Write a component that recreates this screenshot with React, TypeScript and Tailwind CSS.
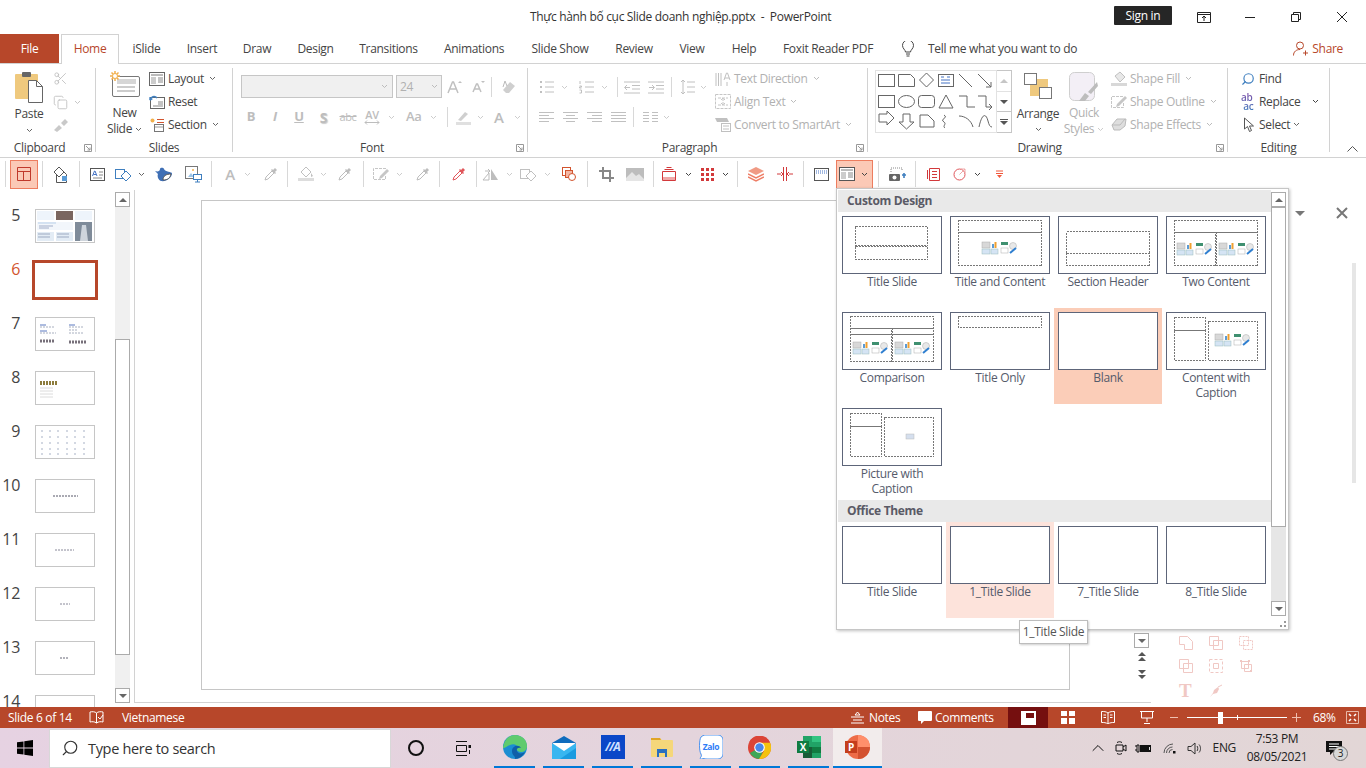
import type { ReactNode } from "react"
import { Scissors, Copy, Search, ChevronUp } from "lucide-react"

const RED = "#B7472A"

function Chev({ className = "text-[#666]" }: { className?: string }) {
  return (
    <svg width="7" height="5" viewBox="0 0 7 5" className={`shrink-0 ${className}`}>
      <path d="M1 1l2.5 2.5L6 1" fill="none" stroke="currentColor" strokeWidth="1" />
    </svg>
  )
}

function I({ w = 16, h = 16, children, className = "" }: { w?: number; h?: number; children: ReactNode; className?: string }) {
  return (
    <svg width={w} height={h} viewBox={`0 0 ${w} ${h}`} fill="none" className={`shrink-0 ${className}`}>
      {children}
    </svg>
  )
}

function Launcher() {
  return (
    <I w={8} h={8} className="text-[#999]">
      <path d="M.5.5h7v7h-7zM2 2l4 4M6 3.5V6H3.5" stroke="currentColor" />
    </I>
  )
}

function Group({ w, label, launcher, className = "", children }: { w: string; label: string; launcher?: boolean; className?: string; children: ReactNode }) {
  return (
    <div className={`flex h-[84px] shrink-0 flex-col border-r border-[#d2d2d2] ${w}`}>
      <div className={`min-h-0 flex-1 ${className}`}>{children}</div>
      <div className={`relative -mb-[4px] h-[16px] shrink-0 text-center text-[12px] leading-[16px] text-[#444] ${launcher ? "pr-[16px]" : ""}`}>
        {label}
        {launcher && (
          <span className="absolute right-[3px] top-[4px] flex">
            <Launcher />
          </span>
        )}
      </div>
    </div>
  )
}

function CmdRow({ icon, label, chev, off, className = "" }: { icon: ReactNode; label: string; chev?: boolean; off?: boolean; className?: string }) {
  return (
    <div className={`flex h-[23px] items-center gap-[3px] text-[12px] ${off ? "text-[#b1b1b1]" : "text-[#444]"} ${className}`}>
      <span className="flex w-[16px] justify-center">{icon}</span>
      <span className="whitespace-nowrap">{label}</span>
      {chev && <Chev className={off ? "ml-[2px] text-[#bbb]" : "ml-[2px] text-[#666]"} />}
    </div>
  )
}

function ClipboardGroup() {
  return (
    <Group w="w-[96px]" label="Clipboard" launcher className="flex">
      <div className="flex w-[58px] flex-col items-center pt-[3px]">
        <I w={30} h={32}>
          <rect x="1" y="3" width="23" height="25" rx="1" fill="#EFC97E" />
          <rect x="8" y="1" width="9" height="5" rx="1" fill="#666" />
          <path d="M14.5 9.5h8l6 6v16h-14z" fill="#fff" stroke="#666" />
          <path d="M22.5 9.5v6h6" stroke="#666" />
        </I>
        <span className="mt-[3px] text-[12px] leading-[15px] text-[#444]">Paste</span>
        <span className="mt-[7px] flex"><Chev /></span>
      </div>
      <div className="-ml-[5px] flex flex-col text-[#bbb]">
        <div className="flex h-[21px] items-center"><Scissors size={15} strokeWidth={1.3} /></div>
        <div className="flex h-[24px] items-center gap-[6px] pt-[3px]">
          <Copy size={15} strokeWidth={1.3} />
          <Chev className="text-[#c6c6c6]" />
        </div>
        <div className="flex h-[22px] items-center">
          <I w={16} h={15}>
            <path d="M1 13l5-5 3 3-5 4zM8 6l4-4 3 3-4 4z" fill="#c9c9c9" />
          </I>
        </div>
      </div>
    </Group>
  )
}

function SlidesGroup() {
  return (
    <Group w="w-[137px]" label="Slides" className="flex">
      <div className="flex w-[53px] flex-col items-center pl-[4px] text-[12px] leading-[16px] text-[#444]">
        <I w={32} h={29} className="mt-[2px]">
          <rect x="3.5" y="6.5" width="27" height="20" rx="1.5" fill="#fff" stroke="#777" />
          <rect x="8" y="9" width="19" height="5" fill="#d6d6d6" />
          <path d="M8 17h18M8 21h18" stroke="#999" />
          <path d="M6 1v10M1 6h10M2.5 2.5l7 7M9.5 2.5l-7 7" stroke="#F2B04C" strokeWidth="1.5" />
          <circle cx="6" cy="6" r="2.5" fill="#fff" stroke="#F2B04C" />
        </I>
        <span className="mt-[6px]">New</span>
        <span className="flex items-center gap-[3px]">Slide <Chev /></span>
      </div>
      <div className="-mt-[1px] flex flex-col">
        <CmdRow
          chev
          label="Layout"
          icon={<I w={16} h={14}><rect x=".5" y=".5" width="15" height="13" stroke="#666" /><rect x="2" y="2" width="12" height="2" fill="#bbb" /><rect x="2" y="5" width="5" height="7" fill="#ccc" /><path d="M9 6h5M9 8h5M9 10h5" stroke="#888" /></I>}
        />
        <CmdRow
          label="Reset"
          icon={<I w={16} h={14}><rect x="1.5" y="2.5" width="14" height="11" stroke="#666" /><path d="M1 5a4 4 0 017-2" stroke="#3F7FBF" strokeWidth="1.6" /><path d="M0 2l1 4 3-2z" fill="#3F7FBF" /><path d="M9 7h5M9 9h5M4 11h10" stroke="#888" /></I>}
        />
        <CmdRow
          chev
          label="Section"
          icon={<I w={16} h={15}><circle cx="3.5" cy="3.5" r="2" fill="#F2B04C" /><path d="M8 2.5h7M8 5.5h7" stroke="#D2542E" /><rect x="5.5" y="7.5" width="9" height="7" stroke="#777" /><path d="M6 10h8" stroke="#999" /></I>}
        />
      </div>
    </Group>
  )
}

const fontToggles = ["B", "I", "U"]

function FontGroup() {
  return (
    <Group w="w-[295px]" label="Font" launcher className="flex flex-col pl-[8px] pt-[7px]">
      <div className="flex h-[23px] items-center">
        <div className="flex h-[23px] w-[152px] items-center justify-end border border-[#c6c6c6] bg-[#f0f0f0] pr-[4px]"><Chev className="text-[#bbb]" /></div>
        <div className="ml-[3px] flex h-[23px] w-[46px] items-center justify-between border border-[#c6c6c6] bg-[#f0f0f0] px-[3px] text-[12px] text-[#b1b1b1]">24<Chev className="text-[#bbb]" /></div>
        <I w={15} h={14} className="ml-[5px]"><path d="M1 13L5.5 2h1L11 13M3 9h6" stroke="#c0c0c0" strokeWidth="1.5" /><path d="M11 3l2-2 2 2z" fill="#c0c0c0" /></I>
        <I w={13} h={13} className="ml-[10px]"><path d="M1 12L4.5 4h1L9 12M2.5 9h5" stroke="#c0c0c0" strokeWidth="1.5" /><path d="M9 1l2 2 2-2z" fill="#c0c0c0" /></I>
        <div className="ml-[6px] h-[20px] w-px bg-[#d8d8d8]" />
        <I w={16} h={16} className="ml-[8px]"><path d="M6 14l-3-3 7-8 5 4-6 7z" fill="#cfcfcf" /><path d="M3 8l2-6 2 5" stroke="#bbb" /></I>
      </div>
      <div className="-ml-[2px] mt-[8px] flex h-[22px] items-center text-[#bdbdbd]">
        {fontToggles.map((t) => (
          <span key={t} className={`w-[24px] text-center text-[13px] font-bold ${t === "I" ? "italic" : ""} ${t === "U" ? "underline" : ""}`}>{t}</span>
        ))}
        <span className="w-[25px] text-center text-[14px] font-bold [text-shadow:1px_1px_1px_#ccc]">S</span>
        <span className="w-[24px] text-center text-[11px] line-through">abc</span>
        <span className="flex w-[24px] flex-col items-center text-[11px] font-semibold leading-[10px]">
          AV
          <I w={16} h={5}><path d="M1 2.5h14M3 .5l-2 2 2 2M13 .5l2 2-2 2" stroke="#bdbdbd" /></I>
        </span>
        <Chev className="ml-[4px] text-[#ccc]" />
        <span className="ml-[11px] w-[16px] text-[13px] font-semibold">Aa</span>
        <Chev className="ml-[8px] text-[#ccc]" />
        <div className="ml-[10px] h-[20px] w-px bg-[#d8d8d8]" />
        <I w={16} h={16} className="ml-[8px]"><path d="M2 11l7-8 3 2-7 7z" fill="#cfcfcf" /><rect y="13" width="15" height="3" fill="#e0e0e0" /></I>
        <Chev className="ml-[5px] text-[#ccc]" />
        <span className="ml-[10px] w-[12px] text-[15px] font-semibold">A</span>
        <Chev className="ml-[8px] text-[#ccc]" />
      </div>
    </Group>
  )
}

function ListIcon({ numbered }: { numbered?: boolean }) {
  return (
    <I w={15} h={14}>
      {numbered ? (
        <path d="M1 1v3M.5 6h2v1h-2v1h2M.5 10h2v3h-2" stroke="#c0c0c0" />
      ) : (
        <path d="M1 1h2v2H1zM1 6h2v2H1zM1 11h2v2H1z" fill="#c0c0c0" />
      )}
      <path d="M6 2h9M6 7h9M6 12h9" stroke="#c0c0c0" />
    </I>
  )
}

function AlignIcon({ d }: { d: string }) {
  return <I w={15} h={11}><path d={d} stroke="#c0c0c0" /></I>
}

function ParagraphGroup() {
  return (
    <Group w="w-[340px]" label="Paragraph" launcher className="flex pl-[11px]">
      <div className="flex w-[176px] flex-col pt-[9px]">
        <div className="flex h-[20px] items-center">
          <ListIcon />
          <Chev className="ml-[7px] text-[#ccc]" />
          <span className="ml-[11px] flex"><ListIcon numbered /></span>
          <Chev className="ml-[7px] text-[#ccc]" />
          <div className="ml-[9px] h-[20px] w-px bg-[#d8d8d8]" />
          <I w={17} h={13} className="ml-[6px]"><path d="M0 1h16M8 4.5h8M8 8h8M0 12h16M6 6.5H1M3 4L.5 6.5 3 9" stroke="#c0c0c0" /></I>
          <I w={17} h={13} className="ml-[7px]"><path d="M0 1h16M8 4.5h8M8 8h8M0 12h16M1 6.5h5M4 4l2.5 2.5L4 9" stroke="#c0c0c0" /></I>
          <div className="ml-[6px] h-[20px] w-px bg-[#d8d8d8]" />
          <I w={15} h={16} className="ml-[8px]"><path d="M3 1v14M1 3l2-2 2 2M1 13l2 2 2-2M7 3h8M7 8h8M7 13h8" stroke="#c0c0c0" /></I>
          <Chev className="ml-[5px] text-[#ccc]" />
        </div>
        <div className="mt-[10px] flex h-[20px] items-center gap-[9px]">
          <AlignIcon d="M0 .5h15M0 3.5h10M0 6.5h15M0 9.5h10" />
          <AlignIcon d="M0 .5h15M3 3.5h9M0 6.5h15M3 9.5h9" />
          <AlignIcon d="M0 .5h15M5 3.5h10M0 6.5h15M5 9.5h10" />
          <AlignIcon d="M0 .5h15M0 3.5h15M0 6.5h15M0 9.5h15" />
          <div className="ml-[-2px] h-[20px] w-px bg-[#d8d8d8]" />
          <div className="flex items-center gap-[5px]">
            <AlignIcon d="M0 .5h6M9 .5h6M0 3.5h6M9 3.5h6M0 6.5h6M9 6.5h6M0 9.5h6M9 9.5h6" />
            <Chev className="text-[#ccc]" />
          </div>
        </div>
      </div>
      <div className="-mt-[1px] flex flex-col">
        <CmdRow off chev label="Text Direction" icon={<I w={16} h={16}><path d="M1 2v13M6 2v13M3.5 2v13" stroke="#c0c0c0" /><path d="M9 9l2.5-7h1L15 9M10 7h4M12 11v4" stroke="#c0c0c0" /></I>} />
        <CmdRow off chev label="Align Text" icon={<I w={16} h={15}><path d="M.5.5h15v14H.5zM3 4h10M3 11h10M8 4v7M6 6l2-2 2 2M6 9l2 2 2-2" stroke="#c6c6c6" strokeDasharray="3 1" /></I>} />
        <CmdRow off chev label="Convert to SmartArt" icon={<I w={16} h={15}><path d="M0 1h12l2 4H2z" fill="#c0c0c0" /><rect x="6.5" y="6.5" width="9" height="8" fill="#fff" stroke="#c0c0c0" /><path d="M8 9h6M8 12h6" stroke="#c0c0c0" /></I>} />
      </div>
    </Group>
  )
}

function ShapeGallery() {
  return (
    <div className="flex h-[63px] w-[137px]">
      <div className="h-[63px] w-[122px] border border-[#e2e2e2] bg-white">
        <svg width="120" height="61" viewBox="0 0 120 61" fill="none" stroke="#666">
          <rect x="2.5" y="3.5" width="16" height="12" />
          <path d="M22.5 3.5h12l4 4v8h-16z" />
          <path d="M50.5 2l7 7-7 7-7-7z" />
          <rect x="62.5" y="3.5" width="15" height="12" />
          <path d="M65 6h3M65 9h9M65 12h9M71 6h3" stroke="#4472C4" />
          <path d="M83 3l13 13M102 3l13 13M115 16v-5M115 16h-5" />
          <rect x="2.5" y="24.5" width="16" height="12" />
          <ellipse cx="30.5" cy="30.5" rx="8" ry="6" />
          <rect x="42.5" y="24.5" width="16" height="12" rx="3" />
          <path d="M70 24l-7 13h14zM83 25h8v11h8M102 25h8v11h6M116 36l-3-3M116 36l-3 3" />
          <path d="M3 41h8v-3l7 7-7 7v-3H3z" transform="translate(0 2)" />
          <path d="M27 43h7v8h4l-7.5 7-7.5-7h4z" />
          <path d="M44 44h8l6 6v6H44zM68 44c5 3-5 4 0 7 3 2-2 4 1 6" />
          <path d="M83 45c6 0 12 4 14 11M103 56c3-14 7-14 9-6 1 4 2 6 4 6" />
        </svg>
      </div>
      <div className="flex w-[15px] flex-col border-y border-r border-[#c6c6c6] text-[#777]">
        <div className="flex flex-1 items-center justify-center border-b border-[#e2e2e2]"><span className="h-0 w-0 border-x-[4px] border-b-[4px] border-x-transparent border-b-[#c6c6c6]" /></div>
        <div className="flex flex-1 items-center justify-center border-b border-[#c6c6c6]"><span className="h-0 w-0 border-x-[4px] border-t-[4px] border-x-transparent border-t-[#555]" /></div>
        <div className="flex flex-1 flex-col items-center justify-center gap-[1px]"><span className="h-px w-[8px] bg-[#555]" /><span className="h-0 w-0 border-x-[4px] border-t-[4px] border-x-transparent border-t-[#555]" /></div>
      </div>
    </div>
  )
}

function DrawingGroup() {
  return (
    <Group w="w-[360px]" label="Drawing" launcher className="flex pl-[7px]">
      <div className="pt-[2px]"><ShapeGallery /></div>
      <div className="flex w-[52px] flex-col items-center text-[12px] leading-[16px] text-[#444]">
        <I w={28} h={26} className="mt-[5px]">
          <rect x="6" y="6" width="18" height="17" fill="#EFC97E" />
          <rect x=".5" y=".5" width="12" height="11" fill="#fff" stroke="#777" />
          <rect x="15.5" y="14.5" width="12" height="11" fill="#fff" stroke="#777" />
        </I>
        <span className="mt-[7px]">Arrange</span>
        <span className="mt-[5px] flex"><Chev /></span>
      </div>
      <div className="-ml-[2px] flex w-[44px] flex-col items-center text-[12px] leading-[16px] text-[#b1b1b1]">
        <I w={30} h={30} className="mt-[4px]">
          <rect x=".5" y=".5" width="25" height="28" rx="5" fill="#F3EFF6" stroke="#cfcfcf" />
          <path d="M10 29l6-8 4 3-4 5zM19 20l9-10 1 4-7 8z" fill="#bdbdbd" />
        </I>
        <span className="mt-[3px]">Quick</span>
        <span className="flex items-center gap-[3px]">Styles <Chev className="text-[#ccc]" /></span>
      </div>
      <div className="-mt-[1px] ml-[5px] flex flex-col">
        <CmdRow off chev label="Shape Fill" icon={<I w={16} h={15}><path d="M4 5l5-4 5 5-5 5z" stroke="#c0c0c0" fill="#e8e8e8" /><rect y="12" width="16" height="3" fill="#d8d8d8" /></I>} />
        <CmdRow off chev label="Shape Outline" icon={<I w={16} h={15}><path d="M12 2.5H.5v11h12V8" stroke="#c6c6c6" strokeDasharray="3 1" /><path d="M6 10l8-8 2 2-8 8-3 1z" fill="#c6c6c6" /></I>} />
        <CmdRow off chev label="Shape Effects" icon={<I w={16} h={15}><path d="M1 8l5-6h9l-1 7-5 4H3z" fill="#dedede" stroke="#bbb" /><path d="M1 8h8l5-6" stroke="#bbb" /></I>} />
      </div>
    </Group>
  )
}

function EditingGroup() {
  return (
    <Group w="w-[102px]" label="Editing" className="flex flex-col pl-[12px]">
      <CmdRow className="-mt-[1px]" label="Find" icon={<Search size={14} strokeWidth={2} className="-scale-x-100 text-[#3F7FBF]" />} />
      <div className="flex h-[23px] items-center gap-[3px] text-[12px] text-[#444]">
        <span className="w-[16px] whitespace-pre bg-gradient-to-b from-[#7A4FA8] to-[#3F7FBF] bg-clip-text pl-[1px] text-[10px] font-semibold leading-[9px] text-transparent">{"ab\n ac"}</span>
        <span>Replace</span>
        <Chev className="ml-[9px]" />
      </div>
      <div className="flex h-[23px] items-center gap-[3px] pl-[3px] text-[12px] text-[#444]">
        <I w={13} h={16}><path d="M1.5 1l0 11 3-2.5 2 5 2-1-2-4.5h4z" stroke="#555" fill="#fff" /></I>
        <span>Select</span>
        <Chev />
      </div>
    </Group>
  )
}

function Sep() {
  return <div className="h-[26px] w-px shrink-0 bg-[#d8d8d8]" />
}

function Dropper({ color = "#bdbdbd" }: { color?: string }) {
  return (
    <I w={15} h={15}>
      <path d="M2 13l1-3 6-6 2 2-6 6z" stroke={color} fill="#fff" />
      <path d="M8 3l1-1 1 1 2-2 2 2-2 2 1 1-1 1z" fill={color} />
    </I>
  )
}

function Cell({ w, children }: { w: string; children: ReactNode }) {
  return <div className={`flex shrink-0 items-center justify-center ${w}`}>{children}</div>
}

function DesignToolbar() {
  return (
    <div className="flex h-[33px] shrink-0 items-center border-t border-[#d2d2d2] bg-white">
      <div className="ml-[5px]"><Sep /></div>
      <div className="ml-[4px] flex h-[29px] w-[28px] shrink-0 items-center justify-center border border-[#ED7D5F] bg-[#FBC9B6]">
        <I w={14} h={14}><path d="M.5.5h13v13H.5zM.5 4.5h13M6.5 4.5v9" stroke="#C0392B" /></I>
      </div>
      <div className="ml-[4px]"><Sep /></div>
      <Cell w="w-[36px]">
        <I w={16} h={17}><path d="M3.5 4.5h6l4 4v8h-10z" stroke="#555" /><path d="M1 6l5-5 5 5-5 5z" fill="#fff" stroke="#555" /><path d="M9 10h5v5H9z" fill="#5B9BD5" /></I>
      </Cell>
      <Sep />
      <Cell w="w-[34px]">
        <I w={15} h={13}><rect x=".5" y=".5" width="14" height="12" stroke="#555" /><path d="M9 4h4M9 7h4M3 10h9" stroke="#888" /><path d="M2.5 8L4.5 3h.5l2 5M3.5 6.5h2.5" stroke="#4472C4" /></I>
      </Cell>
      <Cell w="w-[18px]">
        <I w={17} h={15}><rect x=".5" y="2.5" width="9" height="9" stroke="#3F7FBF" /><path d="M11 4l5 5-5 5-5-5z" fill="#fff" stroke="#3F7FBF" /></I>
      </Cell>
      <Cell w="w-[18px]"><Chev /></Cell>
      <Cell w="w-[26px]">
        <I w={17} h={15}><path d="M0 4c3 1 5 0 5-2 0-1 3-2 4 0 1 3 8 3 8 4 0 5-6 9-11 8C3 13 2 9 3 7z" fill="#3F6FB5" /><path d="M8 13c0-4 3-6 8-6-1 4-3 6-8 6z" fill="#fff" stroke="#555" /></I>
      </Cell>
      <Cell w="w-[35px]">
        <I w={17} h={17}><rect x=".5" y=".5" width="12" height="12" stroke="#777" /><path d="M3 11l3-4 3 4z" fill="#9CC3E6" /><circle cx="8" cy="4" r="1" fill="#F2B04C" /><rect x="8.5" y="8.5" width="8" height="5" fill="#fff" stroke="#3F7FBF" /><path d="M10 16h5M12.5 13v3" stroke="#3F7FBF" /></I>
      </Cell>
      <Sep />
      <div className="ml-[8px]"><Cell w="w-[20px]"><span className="text-[15px] font-semibold text-[#bdbdbd]">A</span></Cell></div>
      <Cell w="w-[14px]"><Chev className="text-[#ccc]" /></Cell>
      <Cell w="w-[33px]"><Dropper /></Cell>
      <Sep />
      <div className="ml-[4px]"><Cell w="w-[28px]"><I w={16} h={16}><path d="M3 6l5-5 5 5-5 5z" stroke="#c0c0c0" /><path d="M13 7l2 3-2 1z" fill="#c0c0c0" /><rect y="12" width="16" height="3" fill="#ddd" /></I></Cell></div>
      <Cell w="w-[6px]"><Chev className="text-[#ccc]" /></Cell>
      <Cell w="w-[37px]"><Dropper /></Cell>
      <Sep />
      <div className="ml-[5px]"><Cell w="w-[24px]"><I w={17} h={14}><path d="M13 1.5H.5v11h12V8" stroke="#c6c6c6" strokeDasharray="3 1" /><path d="M7 9l7-7 2 2-7 7-3 1z" fill="#c6c6c6" /></I></Cell></div>
      <Cell w="w-[12px]"><Chev className="text-[#ccc]" /></Cell>
      <Cell w="w-[34px]"><Dropper /></Cell>
      <Sep />
      <Cell w="w-[36px]"><Dropper color="#E0565B" /></Cell>
      <Sep />
      <Cell w="w-[28px]"><I w={18} h={15}><path d="M1 13l6-7v7z" fill="#fff" stroke="#bbb" /><path d="M9 2l7 11H9z" fill="#bdbdbd" /><path d="M3 4h4M6 2l2 2-2 2" stroke="#bbb" /></I></Cell>
      <Cell w="w-[8px]"><Chev className="text-[#ccc]" /></Cell>
      <Cell w="w-[30px]"><I w={17} h={15}><rect x=".5" y="2.5" width="9" height="9" stroke="#c0c0c0" /><path d="M11 4l5 5-5 5-5-5z" fill="#fff" stroke="#c0c0c0" /></I></Cell>
      <Cell w="w-[8px]"><Chev className="text-[#ccc]" /></Cell>
      <Cell w="w-[36px]"><I w={14} h={14}><rect x=".5" y=".5" width="8" height="8" stroke="#D2542E" /><rect x="3.5" y="3.5" width="7" height="7" fill="#F5B7A5" stroke="#D2542E" /><circle cx="10" cy="10" r="3.5" fill="#fff" stroke="#D2542E" /></I></Cell>
      <Sep />
      <Cell w="w-[36px]"><I w={15} h={15}><path d="M4 0v11h11M0 4h11v11" stroke="#888" strokeWidth="2" /></I></Cell>
      <Cell w="w-[22px]"><I w={18} h={13}><rect width="18" height="13" fill="#bdbdbd" /><path d="M0 10l6-6 4 4 3-2 5 5v2H0z" fill="#e5e5e5" /></I></Cell>
      <div className="ml-[7px]"><Sep /></div>
      <Cell w="w-[30px]"><I w={14} h={14}><path d="M.5 4.5h13v9H.5zM2.5 2.5h9M4.5.5h5" stroke="#D2393B" /><rect x="1" y="10" width="12" height="3" fill="#F0A8A8" /></I></Cell>
      <Cell w="w-[8px]"><Chev className="text-[#444]" /></Cell>
      <Cell w="w-[30px]"><I w={13} h={13}><path d="M0 0h3v3H0zM5 0h3v3H5zM10 0h3v3h-3zM0 5h3v3H0zM5 5h3v3H5zM10 5h3v3h-3zM0 10h3v3H0zM5 10h3v3H5zM10 10h3v3h-3z" fill="#D2393B" /></I></Cell>
      <Cell w="w-[6px]"><Chev className="text-[#444]" /></Cell>
      <div className="ml-[9px]"><Sep /></div>
      <Cell w="w-[36px]"><I w={16} h={15}><path d="M8 0l8 4-8 4-8-4z" fill="#F09A84" /><path d="M0 7l8 4 8-4M0 10l8 4 8-4" stroke="#EE7E66" strokeWidth="1.5" /></I></Cell>
      <Cell w="w-[22px]"><I w={16} h={14}><path d="M6.5 0v14M9.5 0v14" stroke="#D2393B" /><path d="M0 7h4M12 7h4M4 5l2 2-2 2M12 5l-2 2 2 2" stroke="#D2393B" /></I></Cell>
      <div className="ml-[7px]"><Sep /></div>
      <div className="ml-[2px]"><Cell w="w-[30px]"><I w={15} h={13}><rect x=".5" y=".5" width="14" height="12" stroke="#555" /><path d="M2 3h11" stroke="#4472C4" strokeDasharray="1 1" /><path d="M2 5h11" stroke="#4472C4" strokeDasharray="1 1" /></I></Cell></div>
      <div className="flex h-[29px] w-[37px] shrink-0 items-center gap-[6px] border border-[#ED7D5F] bg-[#FBC9B6] pl-[2px]">
        <I w={16} h={14}><rect x=".5" y=".5" width="15" height="13" fill="#fff" stroke="#555" /><rect x="2" y="2" width="12" height="2" fill="#bbb" /><rect x="2" y="5" width="5" height="7" fill="#ccc" /><path d="M9 6h5M9 8h5M9 10h5" stroke="#888" /></I>
        <Chev className="text-[#444]" />
      </div>
      <div className="ml-[5px]"><Sep /></div>
      <Cell w="w-[36px]"><I w={17} h={15}><path d="M2 5V1h11v3" stroke="#888" strokeDasharray="1 1" /><rect x="0" y="7" width="11" height="7" rx="1" fill="#666" /><circle cx="5.5" cy="10.5" r="2" fill="#fff" /><path d="M13 8h4M15 6v5" stroke="#3F7FBF" strokeWidth="1.6" /></I></Cell>
      <Sep />
      <Cell w="w-[34px]"><I w={13} h={13}><path d="M2.5.5h10v12h-10zM.5 2v9M5 3.5h5M5 6.5h5M5 9.5h5" stroke="#D2393B" /></I></Cell>
      <Cell w="w-[18px]"><I w={13} h={13}><circle cx="6.5" cy="6.5" r="5.5" stroke="#E0565B" /><path d="M6.5 6.5L12 1M8 1h4v4" stroke="#F0A8A8" /></I></Cell>
      <Cell w="w-[18px]"><Chev className="text-[#444]" /></Cell>
      <Cell w="w-[26px]"><I w={9} h={8}><path d="M1 1h7M1 3.5h7" stroke="#F0563A" /><path d="M2 5h5L4.5 8z" fill="#F0563A" /></I></Cell>
    </div>
  )
}

function SlideThumb({ n, active, children }: { n: number; active?: boolean; children?: ReactNode }) {
  return (
    <div className="flex h-[54px] shrink-0 items-start">
      <div className={`w-[20px] text-right text-[16px] leading-[12px] ${active ? "text-[#D2542E]" : "text-[#444]"}`}>{n}</div>
      <div className={`ml-[15px] h-[34px] w-[60px] shrink-0 bg-white ${active ? "outline-3 outline-[#B7472A]" : "border border-[#c6c6c6]"}`}>
        {children && <svg width="58" height="32" viewBox="0 0 58 32">{children}</svg>}
      </div>
    </div>
  )
}

function SlidePane() {
  return (
    <div className="flex h-full w-[134px] shrink-0">
      <div className="flex w-[115px] shrink-0 flex-col overflow-hidden pt-[19px]">
        <SlideThumb n={5}>
          <rect x="1" y="1" width="17" height="9" fill="#eef4fb" />
          <rect x="20" y="1" width="17" height="9" fill="#7a6660" />
          <rect x="39" y="1" width="17" height="9" fill="#eef4fb" />
          <rect x="1" y="12" width="36" height="8" fill="#f2f6fb" />
          <path d="M2 13h18" stroke="#b7cfe9" />
          <path d="M3 16h14M3 18h10" stroke="#6b7fa8" strokeWidth=".6" />
          <rect x="1" y="22" width="17" height="9" fill="#e3ecf5" />
          <rect x="20" y="22" width="17" height="9" fill="#e3ecf5" />
          <path d="M2 24h12M21 24h12M2 27h12M21 27h12" stroke="#7f90ad" strokeWidth=".7" />
          <rect x="39" y="12" width="17" height="19" fill="#7f8b99" />
          <path d="M44 31l2-16h4l2 16z" fill="#cfd5dc" />
        </SlideThumb>
        <SlideThumb n={6} active />
        <SlideThumb n={7}>
          <path d="M4 7h6M33 7h6" stroke="#5a78c0" />
          <path d="M4 9h14M33 9h15M4 15h16M33 15h14M33 12h8" stroke="#a8afbf" strokeDasharray="2 1" />
          <path d="M4 13h7" stroke="#5a78c0" />
          <path d="M4 23h15M33 24h18" stroke="#77707a" strokeWidth="3" strokeDasharray="2 1" />
        </SlideThumb>
        <SlideThumb n={8}>
          <path d="M4 11h17" stroke="#8d7c3c" strokeWidth="4" strokeDasharray="2 1" />
          <path d="M4 16h13M4 19h13M4 22h13M4 25h13" stroke="#dcdcdc" />
        </SlideThumb>
        <SlideThumb n={9}>
          <path d="M5 5h2M13 5h2M21 5h2M30 5h2M38 5h2M47 5h2M5 11h2M13 11h2M21 11h2M30 11h2M38 11h2M47 11h2M5 17h2M13 17h2M21 17h2M30 17h2M38 17h2M47 17h2M5 23h2M13 23h2M21 23h2M30 23h2M38 23h2M47 23h2M5 28h2M13 28h2M21 28h2M30 28h2M38 28h2M47 28h2" stroke="#d3d8e2" strokeWidth="2" />
        </SlideThumb>
        <SlideThumb n={10}><path d="M17 16h25" stroke="#556" strokeDasharray="2 1" /></SlideThumb>
        <SlideThumb n={11}><path d="M19 16h19" stroke="#889" strokeDasharray="2 1" /></SlideThumb>
        <SlideThumb n={12}><path d="M24 16h10" stroke="#889" strokeDasharray="2 1" /></SlideThumb>
        <SlideThumb n={13}><path d="M24 16h9" stroke="#667" strokeDasharray="2 1" /></SlideThumb>
        <SlideThumb n={14} />
      </div>
      <div className="mt-[2px] flex h-[511px] w-[15px] shrink-0 flex-col bg-[#f0f0f0]">
        <ScrollBtn up />
        <div className="h-[132px]" />
        <div className="h-[316px] border border-[#ababab] bg-white" />
        <div className="flex-1" />
        <ScrollBtn />
      </div>
    </div>
  )
}

function ScrollBtn({ up }: { up?: boolean }) {
  return (
    <div className="flex h-[15px] w-[15px] shrink-0 items-center justify-center border border-[#ababab] bg-white">
      {up ? (
        <span className="h-0 w-0 border-x-[4px] border-b-[4px] border-x-transparent border-b-[#666]" />
      ) : (
        <span className="h-0 w-0 border-x-[4px] border-t-[4px] border-x-transparent border-t-[#666]" />
      )}
    </div>
  )
}

function EditArea() {
  return (
    <div className="flex h-[513px] w-[1017px] shrink-0 border-b border-l border-[#d2d2d2]">
      <div className="flex-1 pl-[66px] pt-[10px]">
        <div className="h-[490px] w-[869px] border border-[#c6c6c6] bg-white" />
      </div>
      <div className="flex w-[17px] flex-col items-center pr-[2px] pt-[443px]">
        <ScrollBtn />
        <div className="mt-[4px] flex flex-col items-center gap-[1px]">
          <span className="h-0 w-0 border-x-[4px] border-b-[4px] border-x-transparent border-b-[#555]" />
          <span className="h-0 w-0 border-x-[4px] border-b-[4px] border-x-transparent border-b-[#555]" />
        </div>
        <div className="mt-[9px] flex flex-col items-center gap-[1px]">
          <span className="h-0 w-0 border-x-[4px] border-t-[4px] border-x-transparent border-t-[#555]" />
          <span className="h-0 w-0 border-x-[4px] border-t-[4px] border-x-transparent border-t-[#555]" />
        </div>
      </div>
    </div>
  )
}

const pinkStroke = "#F0C8C4"

function RightPanel() {
  return (
    <div className="flex h-full flex-1 flex-col">
      <div className="flex h-[46px] items-center justify-end pr-[18px]">
        <span className="h-0 w-0 border-x-[5px] border-t-[5px] border-x-transparent border-t-[#777]" />
        <I w={12} h={12} className="ml-[31px]"><path d="M1 1l10 10M11 1L1 11" stroke="#777" strokeWidth="2" /></I>
      </div>
      <div className="ml-[201px] mt-[27px] h-[220px] w-[4px] bg-[#e6e6e6]" />
      <div className="ml-[28px] mt-[153px] grid w-[90px] grid-cols-3 gap-y-[9px]">
        <I w={14} h={14}><path d="M.5.5h8l5 5v8h-8v-5h-5z" stroke={pinkStroke} /></I>
        <I w={14} h={14}><path d="M.5.5h9v9h-9zM4.5 4.5h9v9h-9z" stroke={pinkStroke} /></I>
        <I w={14} h={14}><path d="M.5.5h9v9h-9zM4.5 4.5h9v9h-9z" stroke={pinkStroke} strokeDasharray="2 1" /></I>
        <I w={14} h={14}><path d="M.5.5h9v9h-9zM4.5 4.5h9v9h-9z" stroke={pinkStroke} /></I>
        <I w={14} h={14}><path d="M.5.5h13v13H.5z" stroke={pinkStroke} strokeDasharray="3 2" /><path d="M4.5 4.5h5v5h-5z" stroke={pinkStroke} /></I>
        <I w={14} h={14}><path d="M2.5 2.5h7v7h-7zM5.5 5.5h7v7h-7z" stroke={pinkStroke} /><path d="M1 1h2v2H1zM9 1h2v2H9zM11 11h2v2h-2z" fill={pinkStroke} /></I>
        <span className="font-['Liberation_Serif',serif] text-[19px] font-bold leading-[18px] text-[#F0C8C4]">T</span>
        <I w={14} h={14} className="mt-[2px]"><path d="M1 13l3-4 1-3 4-3 1 2-2 4-4 1z" fill={pinkStroke} /><path d="M9 3l4-2" stroke={pinkStroke} /></I>
      </div>
    </div>
  )
}

function MiniIcons({ x, y }: { x: number; y: number }) {
  return (
    <g transform={`translate(${x - 18} ${y - 6})`}>
      <rect x="0" y="0" width="8" height="6" fill="#d8d8d8" stroke="#aaa" strokeWidth=".5" />
      <rect x="0" y="7" width="8" height="5" fill="#d5e4f4" stroke="#9bb" strokeWidth=".5" />
      <rect x="10" y="2" width="2" height="4" fill="#5b9bd5" />
      <rect x="12.5" y="0" width="2" height="6" fill="#f0a030" />
      <rect x="9" y="7" width="7" height="5" fill="#d5e4f4" stroke="#9bb" strokeWidth=".5" />
      <rect x="19" y="0" width="7" height="3" fill="#3f9070" />
      <rect x="19" y="6" width="7" height="5" fill="#fff" stroke="#aaa" strokeWidth=".5" />
      <circle cx="31" cy="4" r="3.5" fill="#e8e8e8" stroke="#aaa" strokeWidth=".5" />
      <path d="M28 11l6-5" stroke="#2f7fd0" strokeWidth="2" />
    </g>
  )
}

type Box = [number, number, number, number]
type LayoutThumb = { name: string; boxes?: Box[]; icons?: [number, number][]; pic?: boolean }

const customLayouts: LayoutThumb[] = [
  { name: "Title Slide", boxes: [[13.5, 10.5, 72, 19], [13.5, 30.5, 72, 13]] },
  { name: "Title and Content", boxes: [[8.5, 4.5, 83, 12], [8.5, 16.5, 83, 33]], icons: [[50, 32]] },
  { name: "Section Header", boxes: [[8.5, 15.5, 83, 22], [8.5, 37.5, 83, 12]] },
  { name: "Two Content", boxes: [[8.5, 4.5, 83, 12], [8.5, 16.5, 41, 33], [50.5, 16.5, 41, 33]], icons: [[29, 33], [71, 33]] },
  { name: "Comparison", boxes: [[8.5, 4.5, 83, 12], [8.5, 16.5, 41, 6], [50.5, 16.5, 41, 6], [8.5, 22.5, 41, 27], [50.5, 22.5, 41, 27]], icons: [[29, 36], [71, 36]] },
  { name: "Title Only", boxes: [[8.5, 4.5, 83, 11]] },
  { name: "Blank" },
  { name: "Content with Caption", boxes: [[8.5, 5.5, 31, 13], [8.5, 18.5, 31, 30], [42.5, 9.5, 49, 39]], icons: [[67, 28]] },
  { name: "Picture with Caption", boxes: [[8.5, 5.5, 31, 13], [8.5, 18.5, 31, 30], [42.5, 9.5, 49, 39]], pic: true },
]

const themeLayouts = ["Title Slide", "1_Title Slide", "7_Title Slide", "8_Title Slide"]

function LayoutItem({ item, bg = "" }: { item: LayoutThumb; bg?: string }) {
  return (
    <div className={`h-[96px] w-[108px] px-[4px] pt-[4px] ${bg}`}>
      <svg width="100" height="58" viewBox="0 0 100 58" className="block bg-white">
        <rect x=".5" y=".5" width="99" height="57" fill="#fff" stroke="#5D6579" />
        {item.boxes?.map((b, i) => (
          <rect key={i} x={b[0]} y={b[1]} width={b[2]} height={b[3]} stroke="#777" strokeDasharray="2 1" fill="none" shapeRendering="crispEdges" />
        ))}
        {item.icons?.map((p, i) => <MiniIcons key={i} x={p[0]} y={p[1]} />)}
        {item.pic && <rect x="64" y="26" width="8" height="5" fill="#d5dfee" stroke="#bbb" strokeWidth=".5" />}
      </svg>
      <div className="px-[4px] text-center text-[12px] leading-[15px] text-[#555b6b]">{item.name}</div>
    </div>
  )
}

function LayoutDropdown() {
  return (
    <div className="absolute left-[836px] top-[188px] z-20 flex h-[442px] w-[453px] border border-[#c6c6c6] bg-white pl-[1px] pt-[1px] shadow-[1px_1px_3px_rgba(0,0,0,0.25)]">
      <div className="w-[433px] shrink-0">
        <div className="h-[22px] bg-[#e9e9e9] pl-[9px] text-[12px] font-bold leading-[22px] text-[#5a5a66]">Custom Design</div>
        <div className="grid h-[288px] grid-cols-[repeat(4,108px)] content-start">
          {customLayouts.map((item) => (
            <LayoutItem key={item.name} item={item} bg={item.name === "Blank" ? "bg-[#FBCDB8]" : ""} />
          ))}
        </div>
        <div className="h-[22px] bg-[#e9e9e9] pl-[9px] text-[12px] font-bold leading-[22px] text-[#5a5a66]">Office Theme</div>
        <div className="grid grid-cols-[repeat(4,108px)]">
          {themeLayouts.map((name, i) => (
            <LayoutItem key={name} item={{ name }} bg={i === 1 ? "bg-[#FDE3DB]" : ""} />
          ))}
        </div>
      </div>
      <div className="flex w-[17px] shrink-0 flex-col">
        <div className="mt-[2px] flex h-[424px] w-[15px] flex-col bg-[#e6e6e6]">
          <ScrollBtn up />
          <div className="h-[320px] border border-[#ababab] bg-white" />
          <div className="flex-1" />
          <ScrollBtn />
        </div>
        <div className="mt-[4px] flex justify-end pr-[1px]">
          <I w={8} h={8}><path d="M5 1h2v2H5zM1 5h2v2H1zM5 5h2v2H5z" fill="#999" /></I>
        </div>
      </div>
    </div>
  )
}

function StatusBar() {
  return (
    <div className="flex h-[21px] shrink-0 items-center bg-[#B7472A] text-[12px] text-white">
      <span className="ml-[8px] w-[81px]">Slide 6 of 14</span>
      <I w={15} h={15}><path d="M7.5 3C6 1.5 3 1.5 1 2v10c2-.5 4.5-.5 6.5 1 2-1.5 4.5-1.5 6.5-1V2c-2-.5-5-.5-6.5 1zM7.5 3v10" stroke="#fff" /><path d="M9 7l2 2 3-4" stroke="#fff" /></I>
      <span className="ml-[18px]">Vietnamese</span>
      <div className="ml-auto flex h-full items-center">
        <I w={13} h={12}><path d="M6.5 0L4 3h5zM0 5h13M2 8h9M0 11h13" stroke="#fff" /></I>
        <span className="ml-[5px] w-[49px]">Notes</span>
        <I w={14} h={13}><path d="M1 0h12a1 1 0 011 1v8a1 1 0 01-1 1H6l-3 3v-3H1a1 1 0 01-1-1V1a1 1 0 011-1z" fill="#fff" /></I>
        <span className="ml-[3px] w-[73px]">Comments</span>
        <div className="flex h-full w-[40px] items-center justify-center bg-[#750F0F]">
          <I w={15} h={14}><path d="M0 0h15v14H0z" fill="#fff" /><path d="M5 2h8v5H5z" fill="#750F0F" /><path d="M2 2h2v10H2zM5 9h8v3H5z" fill="#fff" /></I>
        </div>
        <div className="flex w-[40px] justify-center">
          <I w={14} h={13}><path d="M0 0h6v5H0zM8 0h6v5H8zM0 7h6v6H0zM8 7h6v6H8z" fill="#fff" /></I>
        </div>
        <div className="flex w-[39px] justify-center">
          <I w={14} h={13}><path d="M7 2C5 .5 3 .5.5.5v11c2.5 0 4.5 0 6.5 1.5 2-1.5 4-1.5 6.5-1.5V.5C11 .5 9 .5 7 2zM7 2v11M2.5 4H5M2.5 6.5H5M9 4h2.5M9 6.5h2.5" stroke="#fff" /></I>
        </div>
        <div className="flex w-[40px] justify-center">
          <I w={14} h={13}><path d="M0 .5h14M1.5 1v6h11V1M7 7v4M4 12.5h6" stroke="#fff" /></I>
        </div>
        <span className="ml-[3px] h-px w-[8px] bg-[#f0c0b0]" />
        <div className="relative ml-[9px] h-[14px] w-[100px]">
          <div className="absolute left-0 right-0 top-[6.5px] h-px bg-white" />
          <div className="absolute left-[50px] top-[4px] h-[5px] w-px bg-white" />
          <div className="absolute left-[31px] top-[1px] h-[12px] w-[5px] bg-white" />
        </div>
        <I w={9} h={9} className="ml-[5px]"><path d="M4.5 0v9M0 4.5h9" stroke="#f0c0b0" /></I>
        <span className="ml-[12px] w-[31px]">68%</span>
        <I w={13} h={13} className="ml-[2px] mr-[7px]"><path d="M.5.5h12v12H.5z" stroke="#e8b8a8" /><path d="M3 3l2 2M10 3L8 5M3 10l2-2M10 10L8 8" stroke="#fff" strokeWidth="1.5" /></I>
      </div>
    </div>
  )
}

function EdgeLogo() {
  return (
    <I w={24} h={24}>
      <circle cx="12" cy="12" r="12" fill="#1B8ED2" />
      <path d="M12 0c7 0 12 5 12 11 0 4-3 6-6 6-3 0-5-2-4-4 1-3-3-5-7-3-3 1-6 4-7 3C1 5 6 0 12 0z" fill="#5FCB6E" />
      <path d="M9 16c0-5 7-7 9-3-3-1-5 1-4 3 1 3 5 3 8 1-2 4-6 7-10 7 1-3-3-3-3-8z" fill="#0F5FA8" />
    </I>
  )
}

function MailLogo() {
  return (
    <I w={24} h={24}>
      <path d="M12 1l12 7v16H0V8z" fill="#0F6CBD" />
      <rect y="9" width="24" height="15" fill="#38B6F0" />
      <path d="M0 8h24L12 16z" fill="#fff" />
      <path d="M24 24H8L24 13z" fill="#1A9BE0" />
    </I>
  )
}

function TaskIcon({ children, active }: { children: ReactNode; active?: boolean }) {
  return (
    <div className={`flex h-[40px] w-[49px] shrink-0 flex-col ${active ? "bg-[#f2ecec]" : ""}`}>
      <div className="flex flex-1 items-center justify-center">{children}</div>
      <div className={`h-[2px] bg-[#0078D7] ${active ? "" : "mx-[4px]"}`} />
    </div>
  )
}

function Taskbar() {
  return (
    <div className="flex h-[40px] shrink-0 items-center bg-gradient-to-r from-[#E6D2E2] to-[#E2D6D6] text-[#222]">
      <div className="flex w-[49px] justify-center">
        <I w={16} h={16}><path d="M0 2.3l6.5-.9v6.2H0zM7.3 1.3L16 0v7.6H7.3zM0 8.4h6.5v6.2L0 13.7zM7.3 8.4H16V16l-8.7-1.2z" fill="#000" /></I>
      </div>
      <div className="flex h-[39px] w-[342px] items-center border border-[#d8d8d8] bg-white pl-[11px] text-[14.5px] text-[#333]">
        <Search size={18} strokeWidth={1.5} className="-scale-x-100" />
        <span className="ml-[9px] mt-[1px]">Type here to search</span>
      </div>
      <div className="flex w-[50px] justify-center">
        <span className="h-[16px] w-[16px] rounded-full border-[2.5px] border-[#111]" />
      </div>
      <div className="flex w-[44px] justify-center">
        <I w={16} h={15}><path d="M1 .5h11M1 14.5h11M1.5 4.5h10v6h-10z" stroke="#111" /><rect x="13.5" y="4" width="2.5" height="3" fill="#111" /><path d="M14.5 9v4" stroke="#111" /></I>
      </div>
      <div className="w-[5px]" />
      <TaskIcon><EdgeLogo /></TaskIcon>
      <TaskIcon><MailLogo /></TaskIcon>
      <TaskIcon>
        <div className="flex h-[24px] w-[24px] items-center justify-center bg-[#0A47C8] text-[12px] font-bold italic leading-none tracking-[-1px] text-[#cfe0ff]">//A</div>
      </TaskIcon>
      <TaskIcon>
        <I w={22} h={20}><path d="M0 2a1 1 0 011-1h8l2 2h10a1 1 0 011 1v15a1 1 0 01-1 1H1a1 1 0 01-1-1z" fill="#F5D77A" /><path d="M0 1h9l1 2H0z" fill="#E0A526" /><path d="M6 12h10v8h-2v-4H8v4H6z" fill="#2A6FC0" /></I>
      </TaskIcon>
      <TaskIcon>
        <svg width="24" height="24" viewBox="0 0 24 24">
          <path d="M6 0h13a5 5 0 015 5v14a5 5 0 01-5 5H8c-2 0-4-1-5 0-1 0-2 0-2-1 1-1 2-2 1-4-2-3-2-14 0-17 1-1 3-2 4-2z" fill="#fff" stroke="#1E7CF0" strokeWidth=".8" />
          <text x="12" y="15" textAnchor="middle" fontSize="8.5" fontWeight="700" fill="#2F7CF6">Zalo</text>
        </svg>
      </TaskIcon>
      <TaskIcon>
        <I w={23} h={23}>
          <circle cx="11.5" cy="11.5" r="11.5" fill="#DB4437" />
          <path d="M11.5 11.5L2 17a11.5 11.5 0 009.5 6l5-11z" fill="#3FA757" />
          <path d="M11.5 6.5H22A11.5 11.5 0 0111 23l5-8z" fill="#F4C20D" />
          <path d="M1.5 5.5L6 14l5.5-7.5L22 6.5A11.5 11.5 0 001.5 5.5z" fill="#DB4437" />
          <circle cx="11.5" cy="11.5" r="5.3" fill="#fff" />
          <circle cx="11.5" cy="11.5" r="4.2" fill="#4A86E8" />
        </I>
      </TaskIcon>
      <TaskIcon>
        <svg width="24" height="22" viewBox="0 0 24 22">
          <rect x="6" y="0" width="18" height="22" fill="#21A366" />
          <rect x="15" y="0" width="9" height="6" fill="#33C481" />
          <rect x="6" y="11" width="9" height="11" fill="#185C37" />
          <rect x="15" y="11" width="9" height="6" fill="#107C41" />
          <rect x="0" y="5" width="12" height="12" fill="#107C41" />
          <text x="6" y="14.5" textAnchor="middle" fontSize="10" fontWeight="700" fill="#fff">X</text>
        </svg>
      </TaskIcon>
      <TaskIcon active>
        <svg width="25" height="24" viewBox="0 0 25 24">
          <circle cx="13" cy="12" r="12" fill="#ED6C47" />
          <path d="M13 0a12 12 0 0112 12H13z" fill="#FF8F6B" />
          <path d="M13 12h12a12 12 0 01-12 12z" fill="#D35230" />
          <rect x="0" y="6" width="12" height="12" fill="#C43E1C" />
          <text x="6" y="15.5" textAnchor="middle" fontSize="10" fontWeight="700" fill="#fff">P</text>
        </svg>
      </TaskIcon>
      <div className="ml-auto flex h-full items-center">
        <ChevronUp size={20} strokeWidth={1.2} className="text-[#111]" />
        <I w={12} h={16} className="ml-[7px]"><path d="M1 5h7v6H1zM8 7l3-2v6l-3-2M2 2.5c2-1 3-1 5 0M2 13.5c2 1 3 1 5 0" stroke="#111" /></I>
        <I w={16} h={11} className="ml-[8px]"><path d="M5 2h11v7H5z" fill="#111" /><path d="M0 3h2M0 7h2M2 2h2v7H2z" stroke="#111" /><path d="M14 4h1v3h-1z" fill="#ddd" /></I>
        <I w={13} h={12} className="ml-[12px]"><path d="M1 11a9 9 0 019-9M3.5 11a6 6 0 016-6M6 11a3.5 3.5 0 013.5-3.5" stroke="#555" /><rect x="10" y="9" width="2.5" height="2.5" fill="#111" /></I>
        <I w={15} h={13} className="ml-[11px]"><path d="M1 4.5h3L8 1v11L4 8.5H1zM10 4c1 1 1 4 0 5M12 2.5c2 2 2 6 0 8" stroke="#333" /></I>
        <span className="ml-[11px] text-[12px]">ENG</span>
        <div className="ml-[11px] flex w-[60px] flex-col items-center text-[12px] leading-[18px]">
          <span>7:53 PM</span>
          <span>08/05/2021</span>
        </div>
        <div className="relative ml-[19px] mr-[24px] flex w-[16px] justify-center">
          <I w={16} h={15}><path d="M0 0h16v11H7l-3 3v-3H0z" fill="#111" /><path d="M3 3h10M3 5.5h10M3 8h7" stroke="#fff" /></I>
          <span className="absolute left-[7px] top-[5px] flex h-[15px] w-[15px] items-center justify-center rounded-full border border-[#777] bg-[#d8d8d8] text-[10px] leading-none">3</span>
        </div>
      </div>
    </div>
  )
}

const tabs = [
  { label: "iSlide", w: "w-[55px]" },
  { label: "Insert", w: "w-[56px]" },
  { label: "Draw", w: "w-[54px]" },
  { label: "Design", w: "w-[63px]" },
  { label: "Transitions", w: "w-[83px]" },
  { label: "Animations", w: "w-[88px]" },
  { label: "Slide Show", w: "w-[84px]" },
  { label: "Review", w: "w-[64px]" },
  { label: "View", w: "w-[52px]" },
  { label: "Help", w: "w-[52px]" },
  { label: "Foxit Reader PDF", w: "w-[116px]" },
]

export default function App() {
  return (
    <div className="relative flex h-[768px] w-[1366px] flex-col overflow-hidden bg-white font-['Open_Sans',sans-serif] tracking-[-0.02em]">
      {/* title bar */}
      <div className="flex h-[34px] shrink-0 items-center text-[12px] text-[#333]">
        <div className="ml-[530px] w-[584px] whitespace-pre">Thực hành bố cục Slide doanh nghiệp.pptx  -  PowerPoint</div>
        <div className="-mt-[3px] h-[19px] w-[58px] rounded-[1px] bg-[#262626] text-center leading-[19px] text-white">Sign in</div>
        <div className="ml-[9px] flex">
          <div className="flex w-[46px] justify-center">
            <I w={14} h={11}><path d="M.5.5h13v10H.5zM.5 2.5h13M7 9V4M5 6l2-2 2 2" stroke="#222" /></I>
          </div>
          <div className="flex w-[46px] items-center justify-center"><span className="h-px w-[10px] bg-[#222]" /></div>
          <div className="flex w-[46px] justify-center">
            <I w={10} h={10}><path d="M.5 2.5h7v7h-7zM2.5 2.5v-2h7v7h-2" stroke="#222" /></I>
          </div>
          <div className="flex w-[46px] justify-center">
            <I w={10} h={10}><path d="M0 0l10 10M10 0L0 10" stroke="#222" /></I>
          </div>
        </div>
      </div>

      {/* tabs */}
      <div className="flex h-[30px] shrink-0 items-end border-b border-[#d2d2d2] text-[12px] text-[#444]">
        <div className="h-[29px] w-[59px] bg-[#B7472A] text-center leading-[29px] text-white">File</div>
        <div className="z-10 ml-[2px] -mb-px h-[30px] w-[58px] border-x border-t border-[#d2d2d2] bg-white text-center leading-[28px] text-[#B7472A]">Home</div>
        {tabs.map((t) => (
          <div key={t.label} className={`h-[29px] whitespace-nowrap text-center leading-[29px] ${t.w}`}>{t.label}</div>
        ))}
        <div className="flex h-[29px] items-center">
          <I w={14} h={16} className="ml-[15px]"><path d="M4.5 11c0-2-3-3.5-3-6.5a5.5 5.5 0 0111 0c0 3-3 4.5-3 6.5zM5 13h4M5.5 15h3" stroke="#444" /></I>
          <span className="ml-[13px] whitespace-nowrap">Tell me what you want to do</span>
        </div>
        <div className="ml-auto mr-[23px] flex h-[29px] items-center gap-[4px] text-[#B7472A]">
          <I w={15} h={15}><circle cx="7" cy="4.5" r="3.5" stroke={RED} /><path d="M.5 14.5c0-4 3-6 6.5-6M10 12h5M12.5 9.5v5" stroke={RED} /></I>
          <span>Share</span>
        </div>
      </div>

      {/* ribbon */}
      <div className="flex h-[93px] shrink-0 pt-[4px]">
        <ClipboardGroup />
        <SlidesGroup />
        <FontGroup />
        <ParagraphGroup />
        <DrawingGroup />
        <EditingGroup />
        <div className="flex h-[84px] flex-1 items-end justify-end pr-[8px]">
          <I w={11} h={6}><path d="M.5 5.5L5.5.5l5 5" stroke="#555" /></I>
        </div>
      </div>

      <DesignToolbar />

      <div className="flex h-[517px] shrink-0">
        <SlidePane />
        <EditArea />
        <RightPanel />
      </div>

      <StatusBar />
      <Taskbar />

      <LayoutDropdown />
      <div className="absolute left-[1019px] top-[620px] z-30 flex h-[24px] w-[69px] items-center justify-center whitespace-nowrap border border-[#bdbdbd] bg-white text-[12px] text-[#555] shadow-[1px_1px_2px_rgba(0,0,0,0.2)]">1_Title Slide</div>
    </div>
  )
}
